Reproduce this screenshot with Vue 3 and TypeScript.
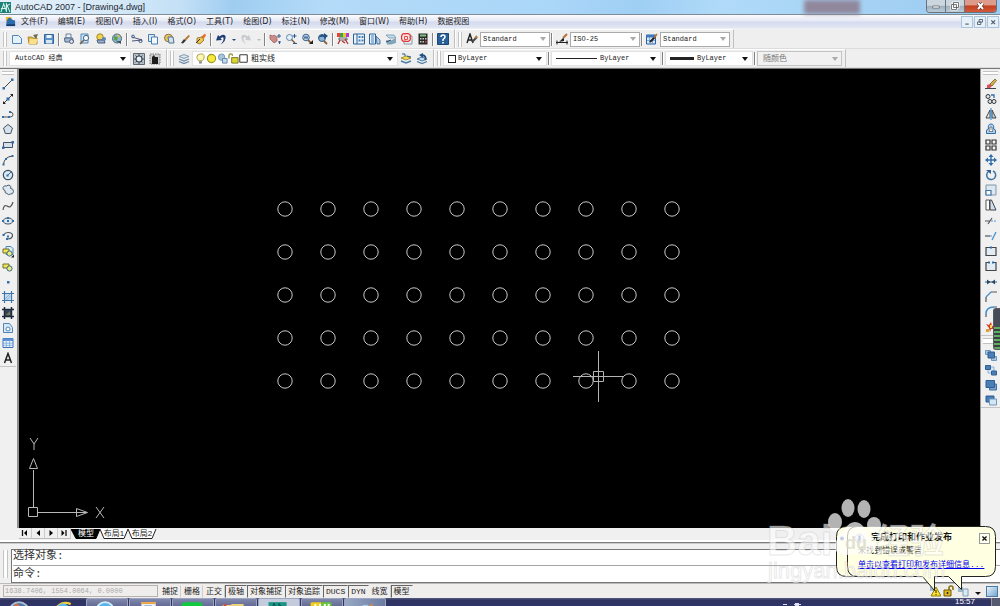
<script setup lang="ts">
import { ref } from 'vue'

interface Tool { id: string; label: string }

const menus: string[] = [
  '文件(F)', '编辑(E)', '视图(V)', '插入(I)', '格式(O)', '工具(T)',
  '绘图(D)', '标注(N)', '修改(M)', '窗口(W)', '帮助(H)', '数据视图',
]

const B = '#2f6ea8'
const page = `<path d="M1.5 2.5h6l3 3v5h-9z" fill="#e4f0fa" stroke="#4f86b8"/>`
const shapesYellow = `<path d="M1 3h6v4H1z" fill="#f3e558" stroke="#6d7028"/><circle cx="7.5" cy="7.5" r="2.6" fill="#e6ee7a" stroke="#40678c"/>`

const icons: Record<string, string> = {
  new: page,
  open: `<path d="M1 4h4l1 1h4v6H2z" fill="#e8b84a" stroke="#9c7a2c" stroke-width=".8"/><path d="M3 6h8l-2 5H2z" fill="#fbe08a"/><path d="M6 2l5-1-2 5z" fill="#6b6b52"/>`,
  save: `<path d="M1.500 1.500h9v9h-9z" fill="#5c93c9" stroke="#2f659d"/><path d="M3.500 2h5v3h-5z" fill="#eef6fc"/><path d="M3 7h6v3.500H3z" fill="#d7e6f3"/>`,
  plot: `<path d="M3 1h5v4H3z" fill="#eef2f8" stroke="#4e6488" stroke-width=".8"/><path d="M1.500 5h8l1 4H2z" fill="#a9b9cf" stroke="#4e6488"/><circle cx="8.500" cy="8.500" r="2" fill="#dde" stroke="#50607c"/>`,
  preview: `<path d="M2 1h7v9H2z" fill="#cfe3f5" stroke="#4f86b8"/><circle cx="7" cy="5" r="2.600" fill="#f6fbff" stroke="#40678c"/><path d="M5 7L1 11" stroke="#7a5a3a" stroke-width="1.500"/>`,
  publish: `<circle cx="5" cy="4" r="3.200" fill="#f0d24e" stroke="#a58428"/><path d="M2 7h7l1 3H3z" fill="#9cb0c8" stroke="#485f7f"/><circle cx="9" cy="6" r="2" fill="#5a88bd"/>`,
  globe: `<circle cx="6" cy="5.500" r="4.500" fill="#8ab9dd" stroke="#567"/><path d="M3 3l4 1-1 4-3-1z" fill="#5aa244"/><path d="M6 1l3 2-2 2z" fill="#e8c33e"/><path d="M5 8h5v3z" fill="#405066"/>`,
  cut: `<path d="M1 4l10 3M1 8l10-1" stroke="#557" fill="none"/><circle cx="2" cy="3.500" r="1.400" fill="none" stroke="#3a5f88"/><circle cx="9.500" cy="8" r="1.600" fill="none" stroke="#3a5f88"/>`,
  copy: `<path d="M1.500 1.500h6v7h-6z" fill="#dceaf6" stroke="#4c7fb0"/><path d="M4.500 4h6v7h-6z" fill="#f0f7fd" stroke="#4c7fb0"/>`,
  paste: `<ellipse cx="5.500" cy="5" rx="4" ry="3.800" fill="#e9c660" stroke="#8a7444"/><path d="M5 4h5l1 6H6z" fill="#d2e4f4" stroke="#526f8c"/>`,
  brush: `<path d="M2 10l3-4 2 1.500-3 3z" fill="#333"/><path d="M5.500 6l4-4 1.500 1-4 4.500z" fill="#b8783c"/>`,
  match: `<path d="M6 4l4-3.500 1 2-3 4z" fill="#f06a2a"/><path d="M2 5l5-1 2 3-4 4-3-1z" fill="#efc54c" stroke="#8c6b28" stroke-width=".8"/><path d="M1 10l4-4" stroke="#333"/>`,
  undo: `<path d="M10.500 3Q8 .500 4.500 3.500L3 2 1 7.500 7 7 5.500 5.500Q8 3.500 8.500 5q.500 3-3 6.500Q11.500 8 10.500 3z" fill="#1e3d74"/>`,
  redo: `<path d="M1.500 3Q4 .500 7.500 3.500L9 2l2 5.500L5 7l1.500-1.500Q4 3.500 3.500 5 3 8 6.500 11.500.500 8 1.500 3z" fill="#c8cbd0"/>`,
  pan: `<path d="M1 2l3 1 1-1 3 2v4l-3 2-4-4z" fill="#c98c88" stroke="#a8605e" stroke-width=".8"/><path d="M10 1v4M8 3h4M9 9h3M10.500 8v3" stroke="#2f5f94"/>`,
  zoomrt: `<circle cx="4.500" cy="4.500" r="3" fill="#e4f1fb" stroke="#5a87b0"/><path d="M6.500 6.500L10 10" stroke="#86603c" stroke-width="1.500"/><path d="M9.500 1v4M7.500 3h4M8 10.500h4" stroke="#29588c"/>`,
  zoomwin: `<circle cx="5" cy="4.500" r="3.300" fill="#b5cde4" stroke="#3c668f"/><path d="M7 7l3 3" stroke="#86603c" stroke-width="1.800"/><path d="M3 3.500h4v2H3z" fill="#49729d"/><path d="M8 11h4V7z" fill="#222"/>`,
  zoomprev: `<circle cx="5" cy="5" r="3.500" fill="#8db1d2" stroke="#315c86"/><path d="M2 5q1-4 5-3V0l4 3-4 3V4Q4 3 2 5z" fill="#244f82"/><path d="M7 8l3 3" stroke="#86603c" stroke-width="1.800"/>`,
  props: `<path d="M0 0h3v4H0z" fill="#e8423a"/><path d="M3 0h3v4H3z" fill="#3aa548"/><path d="M6 0h3v4H6z" fill="#e6c82c"/><path d="M9 0h3v4H9z" fill="#b43cc8"/><path d="M2 5h8v2H2z" fill="#f5f5f5" stroke="#444" stroke-width=".8"/><path d="M3 7l-2 4M8 6l3 5M5 8l3 2" stroke="#a33" stroke-width="1.300"/>`,
  design: `<path d="M.500 1h11v10H.500z" fill="#e9f2fa" stroke="#2d6299"/><path d="M4 1v10" stroke="#2d6299"/><path d="M5.500 3h2v2h-2zM8.500 3h2v2h-2zM5.500 6.500h2v2h-2zM8.500 6.500h2v2h-2z" fill="#4a81b8"/>`,
  palette: `<path d="M.500 1h6v10H.500z" fill="#e9f2fa" stroke="#2d6299"/><path d="M2 3h3M2 5h3M2 7h3M2 9h3" stroke="#4a81b8"/><path d="M7 3l4 4v4H8z" fill="#b5cfe6" stroke="#35648f" stroke-width=".8"/>`,
  sheet: `<path d="M1 2h8l2 3H4z" fill="#c6dcea" stroke="#6d96b0" stroke-width=".8"/><path d="M1 7l4 1 6-3v5l-5 1.500H2z" fill="#7fa6b8"/><path d="M1 9l5-2" stroke="#346"/>`,
  markup: `<path d="M3 3h8v8H3z" fill="#e9eef4" stroke="#74859a" stroke-width=".8"/><path d="M1 2q1-2 3-1 2-1 4 0 2 1 1 3 1 3-1 4-2 1-4 0-2 1-3-1-1-3 0-5z" fill="#fce4e4" stroke="#e02828" stroke-width="1.200"/><path d="M3.500 3.500h3v3h-3z" fill="none" stroke="#e02828" stroke-width=".8"/>`,
  calc: `<path d="M1.500.500h9v11h-9z" fill="#2b2b2b"/><path d="M3 1.500h6v2H3z" fill="#7fbf8a"/><path d="M3 5h1.500v1.500H3zM5.500 5H7v1.500H5.500zM8 5h1.500v1.500H8zM3 8h1.500v1.500H3zM5.500 8H7v1.500H5.500z" fill="#c9c9c9"/><path d="M8 8h1.500v1.500H8z" fill="#e44"/>`,
  help: `<path d="M.500.500h11v11H.500z" fill="#2a6099" stroke="#1d4670"/><path d="M4 4q0-2 2-2t2 2q0 1-2 2.500V8" fill="none" stroke="#fff" stroke-width="1.500"/><path d="M5.200 9h1.600v1.500H5.200z" fill="#fff"/>`,
  textstyle: `<path d="M1 10L4 1l3 9M2 7h4" fill="none" stroke="#222" stroke-width="1.400"/><path d="M6 9l5-5" stroke="#444" stroke-width="2"/><path d="M9 5l2-2" stroke="#c07a3c" stroke-width="2"/>`,
  dimstyle: `<path d="M0 9.500h12M1 7.500v4M11 7.500v4" stroke="#222"/><path d="M3 9l5-5v4z" fill="#222"/><path d="M7 5l4-4" stroke="#b8703a" stroke-width="2"/>`,
  tablestyle: `<path d="M.500 2h9v9h-9z" fill="#dbe9f8" stroke="#2a62a5"/><path d="M.500 2h9v2.500h-9z" fill="#3f7ac0"/><path d="M3.500 4v7M6.500 4v7M1 7.500h8" stroke="#6a9bd0" stroke-width=".8"/><path d="M4 9l5-5" stroke="#222" stroke-width="2"/><path d="M8 5l3-4" stroke="#b8703a" stroke-width="1.600"/>`,
  gear: `<path d="M.500.500h11v11H.500z" fill="#b9c1c9" stroke="#5d6873"/><circle cx="6" cy="6" r="3" fill="#eef3f7" stroke="#3b4a58" stroke-width="1.200"/><path d="M6 1v2M6 9v2M1 6h2M9 6h2M2.500 2.500l1.500 1.500M8 8l1.500 1.500M9.500 2.500L8 4M4 8L2.500 9.500" stroke="#3b4a58"/>`,
  workspace: `<path d="M1 1h10v10H1z" fill="#d0d0d0" stroke="#777" stroke-dasharray="1.500 1"/><path d="M3 4l2-2 1 2h3v7H3z" fill="#1d1d1d"/>`,
  layers: `<path d="M1 3.500l5-2 5 2-5 2z" fill="#d8e4ee" stroke="#6889a6" stroke-width=".8"/><path d="M1 6l5 2 5-2M1 8.500l5 2 5-2" fill="none" stroke="#6889a6" stroke-width="1.300"/>`,
  laycur: `<path d="M1 5l5-2 5 2-5 2z" fill="#f3dc4c" stroke="#8a7a2a" stroke-width=".8"/><path d="M1 8l5 2 5-2" fill="none" stroke="#4d7ea6" stroke-width="1.500"/><path d="M2 1l3 0v2M7 3l4 1" stroke="#2c5f93" fill="none"/>`,
  layprev: `<path d="M1 6l5-2 5 2-5 2z" fill="#c9dbe9" stroke="#4d7ea6"/><path d="M1 8.500l5 2 5-2" fill="none" stroke="#4d7ea6" stroke-width="1.300"/><path d="M9 7q2-4-3-5" stroke="#234f80" stroke-width="1.800" fill="none"/><path d="M7 0v5L3 2z" fill="#234f80"/>`,
  bulb: `<path d="M4 8.500Q2 6.500 2 4.500 2 1.500 6 1t4 3.500q0 2-2 4z" fill="#fdf7b0" stroke="#a49c4a"/><path d="M4.500 9h3v2.500h-3z" fill="#8b8b80"/>`,
  sun: `<circle cx="6" cy="6" r="4.500" fill="#f7e93a" stroke="#9b9324" stroke-width="1.200"/>`,
  vpsun: `<circle cx="5" cy="4.500" r="3.500" fill="#a9c3d8" stroke="#6e93b2"/><path d="M6 6h5v5H6z" fill="#c7dae9" stroke="#5b86aa"/>`,
  lock: `<path d="M1 6V3q0-2 2-2t2 2" fill="none" stroke="#8b8a26" stroke-width="1.300"/><path d="M4 5h7v6H4z" fill="#dcd536" stroke="#777420"/>`,
  square: `<path d="M1 1h10v10H1z" fill="#fff" stroke="#333" stroke-width="1.300"/>`,
  line: `<path d="M2 10l8-8" stroke="#444"/><path d="M.500 9h2.500v2.500H.500zM9 .500h2.500V3H9z" fill="${B}"/>`,
  xline: `<path d="M1 11L11 1" stroke="#333"/><path d="M4.500 4.500h3v3h-3z" fill="${B}"/><path d="M1 8v3h3zM11 4V1H8z" fill="#222"/>`,
  pline: `<path d="M1 9h7q3 0 3-2.500T8 4" fill="none" stroke="#555"/><path d="M0 8h2v2H0zM6 8h2v2H6zM7 3h2v2H7z" fill="${B}"/>`,
  polygon: `<path d="M6 1.500l4.500 3.500-1.800 5.500H3.300L1.500 5z" fill="#d4e2ee" stroke="#46535f"/>`,
  rect: `<path d="M1.500 3.500h9v5h-9z" fill="#d4e2ee" stroke="#46535f"/><path d="M0 7.500h2.500V10H0zM9.500 2H12v2.500H9.500z" fill="${B}"/>`,
  arc: `<path d="M1.500 10.500Q2 3 10.500 2" fill="none" stroke="#444"/><path d="M.500 9.500h2v2h-2zM3 4h2v2H3zM9.500 1h2v2h-2z" fill="${B}"/>`,
  circle: `<circle cx="6" cy="6" r="4.700" fill="#dce8f2" stroke="#35506b" stroke-width="1.200"/><path d="M5 7l4-4" stroke="${B}"/><path d="M4.500 5.500h2v2h-2z" fill="${B}"/>`,
  revcloud: `<path d="M3 6.500Q.500 6 1 3.500 2 1 4.500 2 6 .500 8 1.500 9.500 2.500 8.500 4.500 11.500 4.500 11.500 7.500 11 10.500 8.500 10 6 11.500 5 9.500 2.500 9.500 3 6.500z" fill="#dce8f2" stroke="#4b5b6b"/>`,
  spline: `<path d="M1 10q1-6 4-4 4 3 6-4" fill="none" stroke="#555" stroke-width="1.200"/>`,
  ellipse: `<ellipse cx="6" cy="6" rx="4.500" ry="3" fill="#dce8f2" stroke="#46535f"/><path d="M0 5h2v2H0zM10 5h2v2h-2zM5 2h2v2H5zM5 5h2v2H5z" fill="${B}"/>`,
  ellarc: `<path d="M1.500 5Q3 2.500 6 2.500q4.500 0 4.500 3T6 9" fill="none" stroke="#46535f" stroke-width="1.200"/><path d="M.500 4h2v2h-2zM5 5.500h2v2H5zM4 8h2v2H4z" fill="${B}"/>`,
  insert: `<path d="M4 .500h5l2 2v6H4z" fill="#deecf8" stroke="#4f86b8"/>${shapesYellow}<path d="M9 11.500h3v-3z" fill="#222"/>`,
  block: shapesYellow,
  point: `<path d="M5 5h2.500v2.500H5z" fill="${B}"/>`,
  hatch: `<path d="M2.500 0v12M9.500 0v12M0 2.500h12M0 9.500h12" stroke="#3f75ab" stroke-width="1.200"/><path d="M3 3h6v6H3z" fill="#c4dbee"/><path d="M3 8l5-5M4.500 9L9 4.500" stroke="#74a2cb" stroke-width=".7"/>`,
  gradient: `<path d="M2.500 0v12M9.500 0v12M0 2.500h12M0 9.500h12" stroke="#1d2a3a" stroke-width="1.500"/><path d="M3 3h6v6H3z" fill="#33425c"/><path d="M4 8l4-4v4z" fill="#7d7b4a"/>`,
  region: `<path d="M1.500 1.500h6l3 4v5h-9z" fill="#d9e8f5" stroke="#4f86b8"/><circle cx="6" cy="7" r="2" fill="#fff" stroke="#4f86b8"/>`,
  table: `<path d="M1 1.500h10v9H1z" fill="#eaf3fc" stroke="#3c74ba"/><path d="M1 1.500h10v2.500H1z" fill="#5c92d4"/><path d="M4.300 3v7M7.600 3v7M1 6.200h10M1 8.300h10" stroke="#7ba8da" stroke-width=".8"/>`,
  mtext: `<path d="M2.500 11L6 1.500 9.500 11M3.800 8h4.400" fill="none" stroke="#222" stroke-width="1.500"/>`,
  erase: `<path d="M5 6l5-5 1.500 1.500L7 8z" fill="#d8b24a" stroke="#6d5a26" stroke-width=".8"/><path d="M2 7l3-1 2 2-2 2H2z" fill="#d8525a"/><path d="M0 10.500h11" stroke="#444"/>`,
  copyobj: `<circle cx="3" cy="3.500" r="2" fill="#dde8f2" stroke="#333"/><circle cx="5" cy="8.500" r="2" fill="#dde8f2" stroke="#333"/><circle cx="9" cy="8.500" r="2" fill="#dde8f2" stroke="#333"/><path d="M6 2h3v3" stroke="${B}" fill="none" stroke-width="1.300"/>`,
  mirror: `<path d="M5 2v8H1z" fill="#e2edf6" stroke="#444"/><path d="M7 2v8h4z" fill="#b8d0e4" stroke="#444"/><path d="M6 0v12" stroke="#3f8ed0" stroke-width="1.200"/>`,
  offset: `<path d="M1.500 10.500V8q0-2 2-2-1-5 2.500-5t2.500 5q2 0 2 2v2.500z" fill="#b5d4ee" stroke="#2f6ea8"/><path d="M4 8.500h4q0-1-1-1.500V4H5v3q-1 .500-1 1.500z" fill="#fff" stroke="#555" stroke-width=".7"/>`,
  array: `<path d="M1 1h4v4H1zM7 1h4v4H7zM1 7h4v4H1zM7 7h4v4H7z" fill="#f2f6fa" stroke="#333" stroke-width="1.200"/>`,
  move: `<path d="M6 1v10M1 6h10" stroke="${B}" stroke-width="1.400"/><path d="M6 0l2.500 3h-5zM6 12l2.500-3h-5zM0 6l3-2.500v5zM12 6L9 3.500v5z" fill="${B}"/>`,
  rotate: `<path d="M3.500 2.500A4.500 4.500 0 1 0 8 2" fill="none" stroke="#3d74a6" stroke-width="1.500"/><path d="M1 1h5v4z" fill="#2d5f92"/>`,
  scale: `<path d="M1 1h10v10H1z" fill="#dbe7f1" stroke="#8296a8"/><path d="M1 6.500h5V11H1z" fill="#fff" stroke="#3d74a6" stroke-width="1.200"/>`,
  stretch: `<path d="M1 1h3.500v10H1z" fill="#fff" stroke="#555"/><path d="M5 1h1.500L11 11H5z" fill="#cddff0" stroke="#444"/>`,
  trim: `<path d="M0 6h4.500M3 9l4-6" stroke="#555" stroke-width="1.200"/><path d="M6 6h6" stroke="#4c96d8" stroke-width="1.200" stroke-dasharray="2 1"/>`,
  extend: `<path d="M0 6h5" stroke="#555" stroke-width="1.200"/><path d="M5 6h3" stroke="#4c96d8" stroke-dasharray="2 1"/><path d="M7 10l4-8" stroke="#3f8ed0" stroke-width="1.200"/>`,
  breakpt: `<path d="M1 2.500h10v8H1z" fill="#e2ecf5" stroke="#444" stroke-width="1.200"/><path d="M5 1.500h2v2H5z" fill="${B}"/>`,
  break: `<path d="M4 2.500H1v8h10v-8H8" fill="#e2ecf5" stroke="#444" stroke-width="1.200"/><path d="M3 1.500h2v2H3zM7 1.500h2v2H7z" fill="${B}"/>`,
  join: `<path d="M0 6h12" stroke="#456"/><path d="M2 3.500L5.500 6 2 8.500zM10 3.500L6.500 6 10 8.500z" fill="#234b70"/>`,
  chamfer: `<path d="M1 11V6M6 1h6" stroke="#555" stroke-width="1.200"/><path d="M1 6l5-5" stroke="#3f8ed0" stroke-width="1.200"/>`,
  fillet: `<path d="M1 11V8M9 1h3" stroke="#555" stroke-width="1.200"/><path d="M1 8q0-7 8-7" stroke="#3f8ed0" stroke-width="1.500" fill="none"/>`,
  explode: `<path d="M1 3l3 1 2-3 1 4 4-1-2 4-3 0-1 3-1-4z" fill="#d83a2a"/><path d="M1 8h3v3H1zM8 8h3v3H8z" fill="#d9a43a"/><path d="M5 4h2v3H5z" fill="#ffd94c"/>`,
  front: `<path d="M.500 1.500h5v4h-5zM6.500 7.500h5v4h-5z" fill="#a9c6e0" stroke="#6d98c0"/><path d="M3 3h6.500v6H3z" fill="#4a7eb4" stroke="#2f5f94"/>`,
  back: `<path d="M3 3h6v6H3z" fill="#dce9f5" stroke="#8fb2d2"/><path d="M.500 1.500h5v4h-5zM6.500 7h5v4h-5z" fill="#4a7eb4" stroke="#2f5f94"/>`,
  above: `<path d="M4.500 5h7v6h-7z" fill="#7ba3cc" stroke="#3f71a6"/><path d="M1 1.500h8.500v7H1z" fill="#4a7eb4" stroke="#2f5f94"/>`,
  under: `<path d="M1 2h8v6H1z" fill="#4a7eb4" stroke="#2f5f94"/><path d="M4.500 5h7v6h-7z" fill="#d4e5f4" stroke="#6d98c0"/>`,
  logo: `<path d="M0 0h12v12H0z" fill="#1c8177"/><path d="M1 11L4 2l3 8M7 1v10M7 2l4 9M1 7h5M8 4l3-2" fill="none" stroke="#d8f3ee" stroke-width="1.100"/>`,
  doc: `<path d="M1 1h6v5H1z" fill="#f0b92e"/><path d="M2 5q2-5 5-2 1 2 4 2v6H1z" fill="#2b6cae"/><path d="M2 9h9v2H2z" fill="#173c69"/>`,
}

const tool = (s: string): Tool[] => s.split(' ').map(p => {
  const [id, label] = p.split(':')
  return { id, label }
})

const standardGroups: Tool[][] = [
  tool('new:新建 open:打开 save:保存'),
  tool('plot:打印 preview:打印预览 publish:发布 globe:三维DWF'),
  tool('cut:剪切 copy:复制 paste:粘贴 brush:特性匹配 match:块编辑器'),
]
const viewGroups: Tool[][] = [
  tool('pan:实时平移 zoomrt:实时缩放 zoomwin:窗口缩放 zoomprev:缩放上一个'),
  tool('props:特性 design:设计中心 palette:工具选项板 sheet:图纸集 markup:标记集 calc:计算器'),
  tool('help:帮助'),
]
const drawTools = tool('line:直线 xline:构造线 pline:多段线 polygon:正多边形 rect:矩形 arc:圆弧 circle:圆 revcloud:修订云线 spline:样条曲线 ellipse:椭圆 ellarc:椭圆弧 insert:插入块 block:创建块 point:点 hatch:图案填充 gradient:渐变色 region:面域 table:表格 mtext:多行文字')
const modifyTools = tool('erase:删除 copyobj:复制对象 mirror:镜像 offset:偏移 array:阵列 move:移动 rotate:旋转 scale:缩放 stretch:拉伸 trim:修剪 extend:延伸 breakpt:打断于点 break:打断 join:合并 chamfer:倒角 fillet:圆角 explode:分解')
const orderTools = tool('front:前置 back:后置 above:置于对象之上 under:置于对象之下')
const styleCombos = [
  { icon: 'textstyle', label: '文字样式', value: 'Standard' },
  { icon: 'dimstyle', label: '标注样式', value: 'ISO-25' },
  { icon: 'tablestyle', label: '表格样式', value: 'Standard' },
]
const layerMarks = ['bulb', 'sun', 'vpsun', 'lock', 'square']

const cols = Array.from({ length: 10 }, (_, i) => 266 + i * 43)
const rows = Array.from({ length: 5 }, (_, i) => 140 + i * 43)

const modes = ref([
  { name: '捕捉', on: false }, { name: '栅格', on: false }, { name: '正交', on: false },
  { name: '极轴', on: true }, { name: '对象捕捉', on: true }, { name: '对象追踪', on: true },
  { name: 'DUCS', on: true }, { name: 'DYN', on: true }, { name: '线宽', on: false },
  { name: '模型', on: true },
])
const command = ref('')
const balloon = ref(true)
</script>

<template>
  <div class="app">
    <header class="title">
      <svg class="ico" viewBox="0 0 12 12" v-html="icons.logo" />
      <h1>AutoCAD 2007 - [Drawing4.dwg]</h1>
      <i class="blur-tab" />
      <div class="win">
        <button aria-label="最小化"><svg viewBox="0 0 22 12"><path d="M7 6h8v2.500H7z" fill="#fff" stroke="#555" stroke-width=".8" /></svg></button>
        <button aria-label="还原"><svg viewBox="0 0 18 12"><path d="M7.500 2.500h5v5h-5zM5.500 4.500h5v5h-5z" fill="#ddd" stroke="#fff" stroke-width="2" /><path d="M7.500 2.500h5v5h-5zM5.500 4.500h5v5h-5z" fill="none" stroke="#555" stroke-width=".8" /></svg></button>
        <button class="close" aria-label="关闭"><svg viewBox="0 0 30 12"><path d="M12.500 3l5 6M17.500 3l-5 6" stroke="#5b2a24" stroke-width="3.400" /><path d="M12.500 3l5 6M17.500 3l-5 6" stroke="#fff" stroke-width="2" /></svg></button>
      </div>
    </header>

    <nav class="menu">
      <svg class="ico" viewBox="0 0 12 12" v-html="icons.doc" />
      <button v-for="m in menus" :key="m">{{ m }}</button>
      <div class="mdi">
        <button aria-label="最小化图形"><svg viewBox="0 0 12 12"><path d="M4 8.500h4" stroke="#456" stroke-width="1.300" /></svg></button>
        <button aria-label="还原图形"><svg viewBox="0 0 12 12"><path d="M5 3h4v3H5zM3 6h4v3H3z" fill="none" stroke="#456" /></svg></button>
        <button aria-label="关闭图形"><svg viewBox="0 0 12 12"><path d="M4 4l4.500 4.500M8.500 4L4 8.500" stroke="#456" stroke-width="1.300" /></svg></button>
      </div>
    </nav>

    <div class="bars first">
      <div class="bar">
        <i class="grip" />
        <template v-for="(g, n) in standardGroups" :key="n">
          <button v-for="t in g" :key="t.id" class="tb" :aria-label="t.label"><svg class="ico" viewBox="0 0 12 12" v-html="icons[t.id]" /></button>
          <i class="sep" />
        </template>
        <button class="tb" aria-label="放弃"><svg class="ico" viewBox="0 0 12 12" v-html="icons.undo" /></button>
        <button class="drop" aria-label="放弃列表" />
        <button class="tb" aria-label="重做"><svg class="ico" viewBox="0 0 12 12" v-html="icons.redo" /></button>
        <button class="drop off" aria-label="重做列表" />
        <template v-for="(g, n) in viewGroups" :key="'v' + n">
          <i class="sep" />
          <button v-for="t in g" :key="t.id" class="tb" :aria-label="t.label"><svg class="ico" viewBox="0 0 12 12" v-html="icons[t.id]" /></button>
        </template>
      </div>
      <div class="bar">
        <i class="grip" />
        <template v-for="(c, n) in styleCombos" :key="c.label">
          <i v-if="n" class="sep" />
          <button class="tb" :aria-label="c.label + '管理'"><svg class="ico" viewBox="0 0 12 12" v-html="icons[c.icon]" /></button>
          <span class="combo w-style dim"><select :aria-label="c.label"><option>{{ c.value }}</option></select></span>
        </template>
      </div>
    </div>

    <div class="bars second">
      <div class="bar">
        <i class="grip" />
        <span class="combo w-space"><select aria-label="工作空间"><option>AutoCAD 经典</option></select></span>
        <button class="tb" aria-label="工作空间设置"><svg class="ico" viewBox="0 0 12 12" v-html="icons.gear" /></button>
        <button class="tb" aria-label="我的工作空间"><svg class="ico" viewBox="0 0 12 12" v-html="icons.workspace" /></button>
      </div>
      <div class="bar">
        <i class="grip" />
        <button class="tb" aria-label="图层特性管理器"><svg class="ico" viewBox="0 0 12 12" v-html="icons.layers" /></button>
        <span class="combo w-layer">
          <svg v-for="m in layerMarks" :key="m" class="mark" viewBox="0 0 12 12" v-html="icons[m]" />
          <select class="cjk" aria-label="图层"><option>粗实线</option></select>
        </span>
        <button class="tb" aria-label="将对象的图层置为当前"><svg class="ico" viewBox="0 0 12 12" v-html="icons.laycur" /></button>
        <button class="tb" aria-label="上一个图层"><svg class="ico" viewBox="0 0 12 12" v-html="icons.layprev" /></button>
      </div>
      <div class="bar">
        <i class="grip" />
        <span class="combo w-color"><i class="swatch" /><select aria-label="颜色"><option>ByLayer</option></select></span>
        <i class="sep" />
        <span class="combo w-ltype"><i class="rule" /><select aria-label="线型"><option>ByLayer</option></select></span>
        <i class="sep" />
        <span class="combo w-lweight"><i class="rule heavy" /><select aria-label="线宽"><option>ByLayer</option></select></span>
        <i class="sep" />
        <span class="combo w-plot dim off"><select class="cjk" aria-label="打印样式" disabled><option>随颜色</option></select></span>
      </div>
    </div>

    <main class="work">
      <aside class="side">
        <i class="hgrip" />
        <div class="tools draw">
          <button v-for="t in drawTools" :key="t.id" :aria-label="t.label"><svg class="ico" viewBox="0 0 12 12" v-html="icons[t.id]" /></button>
        </div>
      </aside>
      <section class="canvas">
        <svg class="model" fill="none">
          <g stroke="#c8c8c8">
            <template v-for="y in rows" :key="y">
              <circle v-for="x in cols" :key="x" :cx="x" :cy="y" r="7.200" />
            </template>
          </g>
          <path d="M554 307.500h51M579.500 282v51M574.500 302.500h10v10h-10z" stroke="#b4b4b4" />
        </svg>
        <svg class="ucs" viewBox="0 0 90 80" fill="none" stroke="#b8b8b8">
          <path d="M4.500 61.500h9v9h-9zM9.500 61V24M13.500 66.500h49M9.500 12.500L5.500 22.500h8zM63.500 66.500l-11-4v8z" />
          <path d="M6-8l4 6 4-6M10-2v6M72 61l8 11M80 61l-8 11" />
        </svg>
      </section>
      <aside class="side right">
        <i class="hgrip" />
        <div class="tools modify">
          <button v-for="t in modifyTools" :key="t.id" :aria-label="t.label"><svg class="ico" viewBox="0 0 12 12" v-html="icons[t.id]" /></button>
        </div>
        <i class="hgrip second" />
        <div class="tools order">
          <button v-for="t in orderTools" :key="t.id" :aria-label="t.label"><svg class="ico" viewBox="0 0 12 12" v-html="icons[t.id]" /></button>
        </div>
        <i class="meter" />
      </aside>
    </main>

    <div class="tabs">
      <button aria-label="第一个"><svg viewBox="0 0 12 10"><path d="M3.500 2v6" stroke="#111" stroke-width="1.300" /><path d="M8 2v6L5 5z" /></svg></button>
      <button aria-label="上一个"><svg viewBox="0 0 12 10"><path d="M8 2v6L4.500 5z" /></svg></button>
      <button aria-label="下一个"><svg viewBox="0 0 12 10"><path d="M4.500 2v6L8 5z" /></svg></button>
      <button aria-label="最后一个"><svg viewBox="0 0 12 10"><path d="M3.500 2v6l3-3z" /><path d="M8 2v6" stroke="#111" stroke-width="1.300" /></svg></button>
      <div class="sheets">
        <button class="sheet cur"><svg viewBox="0 0 30 10" preserveAspectRatio="none"><path d="M0 0l5 9.500h20L29 0z" fill="#000" stroke="#000" /></svg><span>模型</span></button>
        <button class="sheet"><svg viewBox="0 0 30 10" preserveAspectRatio="none"><path d="M1 0l4 9.500h20L29 0" fill="#fff" stroke="#222" /></svg><span>布局1</span></button>
        <button class="sheet"><svg viewBox="0 0 30 10" preserveAspectRatio="none"><path d="M1 0l4 9.500h20L29 0" fill="#fff" stroke="#222" /></svg><span>布局2</span></button>
      </div>
    </div>

    <section class="cmd">
      <i class="grip" />
      <div class="cmdbox">
        <p>选择对象:</p>
        <label class="prompt">命令:<input v-model="command" type="text"></label>
      </div>
    </section>

    <footer class="status">
      <output class="coords">1638.7406, 1554.0064, 0.0000</output>
      <button v-for="m in modes" :key="m.name" :class="{ on: m.on }" :aria-pressed="m.on" @click="m.on = !m.on">{{ m.name }}</button>
      <div class="tray">
        <svg viewBox="0 0 12 12"><path d="M1 1h5v5H1z" fill="#9ab6d0" /><path d="M7 2l5 9H2z" fill="#ffe12c" stroke="#8a7a10" /><path d="M7 5v3M7 9v1" stroke="#222" /></svg>
        <svg viewBox="0 0 12 12"><path d="M6 6V3q0-2 2-2t2 2v2" fill="none" stroke="#8a7410" stroke-width="1.600" /><path d="M1 5h7v6H1z" fill="#e2b81c" stroke="#6d5a08" /><path d="M4.500 7v2" stroke="#222" stroke-width="1.500" /></svg>
        <svg viewBox="0 0 12 12"><path d="M1 2h5v5H1z" fill="#9fb8c8" /><path d="M6 4h5v7H6z" fill="#dbe9f2" stroke="#7fa0b8" /></svg>
        <button class="drop" aria-label="状态栏菜单" />
        <button class="clean" aria-label="清除屏幕" />
      </div>
    </footer>

    <div class="task">
      <button aria-label="开始"><svg viewBox="0 0 42 8"><circle cx="19" cy="11" r="11" fill="#aebfd4" /><circle cx="19" cy="11" r="9" fill="#5377a5" /><path d="M14 4q3-2 5 0v4h-6z" fill="#dd6b3c" /><path d="M20 5q3 1 5 0v3h-5z" fill="#7db548" /></svg></button>
      <button aria-label="浏览器"><svg viewBox="0 0 42 8"><path d="M12 8q7-9 16-5" fill="none" stroke="#f3cf3a" stroke-width="2.500" /><circle cx="20" cy="10" r="6" fill="none" stroke="#59b9ee" stroke-width="3" /></svg></button>
      <button class="open" aria-label="应用"><svg viewBox="0 0 42 8"><circle cx="19" cy="10" r="10" fill="#d5edfb" /><circle cx="19" cy="10" r="8" fill="#57b4ec" /></svg></button>
      <button class="open" aria-label="文档"><svg viewBox="0 0 42 8"><path d="M12 1h15v7H12z" fill="#e9f1fa" /><path d="M12 1h15v2H12z" fill="#f0a33c" /><path d="M15 5h8" stroke="#86a8cf" stroke-width="1.500" /></svg></button>
      <button class="open" aria-label="视频"><svg viewBox="0 0 42 8"><rect x="9" y="1" width="22" height="14" rx="4" fill="#0ecb3d" /></svg></button>
      <button class="open" aria-label="文件夹"><svg viewBox="0 0 42 8"><path d="M7 4h8l2-1h12v5H7z" fill="#ecd37d" /><path d="M8 3h3v2H8z" fill="#d8423a" /><path d="M17 5h8v1h-8z" fill="#4d9ad0" /></svg></button>
      <button class="open lit" aria-label="AutoCAD"><svg viewBox="0 0 42 8"><path d="M10 1h19v7H10z" fill="#1a9485" /><path d="M13 8l3-6 2 6M21 2v6M21 3l5 5" stroke="#0c4c45" fill="none" /></svg></button>
      <button class="open" aria-label="输入法"><svg viewBox="0 0 42 8"><path d="M9 8V2q0-1 2-1h9v7z" fill="#f4cd1a" /><path d="M20 1h9q2 0 2 2v5H20z" fill="#66c936" /><path d="M14 3v2M19 3v2M24 3v2M28 3v2" stroke="#fff" stroke-width="2" /></svg></button>
      <button class="open lit2" aria-label="画图"><svg viewBox="0 0 42 8"><path d="M14 8q4-5 10-4l3 4z" fill="#a8cfe6" /><path d="M25 5l4-3v3z" fill="#d18c4c" /></svg></button>
      <svg class="bits" viewBox="0 0 24 8"><path d="M2 6h4v1H2zM14 5h4v3h-4zM13 6h7v1h-7z" fill="#dfe2ec" /></svg>
      <time>15:57</time>
      <i class="peek" />
    </div>

    <div v-if="balloon" class="balloon">
      <svg class="shape" viewBox="0 0 160 75">
        <path d="M10.500.500H60v50H10.500q-10 0-10-10v-30q0-10 10-10z" fill="#ffffe1" stroke="#222" />
        <path d="M21.500.500h128q10 0 10 10v30q0 10-10 10h-24v13l-13-13h-14v14l-12-14h-65q-10 0-10-10v-30q0-10 10-10z" fill="#ffffe1" stroke="#222" />
        <circle cx="6" cy="12.500" r="2" fill="#3657b8" />
        <circle cx="23.500" cy="12.500" r="4.500" fill="#e6ecf7" stroke="#aab6d4" /><path d="M23.500 9.500v6" stroke="#1f49c0" stroke-width="2" />
      </svg>
      <div class="note">
        <strong>完成打印和作业发布</strong>
        <p>未找到错误或警告</p>
        <a href="#">单击以查看打印和发布详细信息...</a>
      </div>
      <button aria-label="关闭通知" @click="balloon = false"><svg viewBox="0 0 11 11"><path d="M3 3l5 5M8 3L3 8" stroke="#111" stroke-width="1.600" /></svg></button>
    </div>

    <svg class="mark-brand" viewBox="0 0 190 90">
      <g fill="#fff" fill-opacity=".7">
        <ellipse cx="69" cy="23" rx="7" ry="9" />
        <ellipse cx="82" cy="9" rx="6.500" ry="9" />
        <ellipse cx="98" cy="10" rx="6.500" ry="9" />
        <ellipse cx="108" cy="26" rx="7" ry="8" />
        <path d="M89 23q6 0 10 7 12 9 11 18-2 9-13 8-8-2-16 0-11 1-12-8 0-9 10-18 4-7 10-7z" />
      </g>
      <g fill="#fff" fill-opacity=".6" stroke="#aaa" stroke-opacity=".28" font-weight="bold">
        <text x="1" y="56" font-size="42">Bai</text>
        <text x="110" y="54" font-size="34">经验</text>
        <text x="2" y="79" font-size="22" font-weight="normal">jingyan.baidu.com</text>
      </g>
      <text x="79" y="50" font-size="18" font-weight="bold" fill="#dadac8" fill-opacity=".8">du</text>
    </svg>
  </div>
</template>

<style>
html, body { margin: 0; background: #f0efee; }
</style>

<style scoped>
.app { position: relative; display: flex; flex-direction: column; height: 100vh; overflow: hidden; background: #f0f0f0; color: #222; font: 8px/12px "Liberation Sans", "Noto Sans CJK SC", sans-serif; }
.app * { box-sizing: border-box; }
button { display: block; flex: none; margin: 0; padding: 0; border: 0; background: none; color: inherit; font: inherit; }
svg { display: block; }
p, h1 { margin: 0; font: inherit; }
.ico { width: 12px; height: 12px; }

.title { display: flex; flex: none; align-items: center; height: 15px; padding: 0 3px 0 0; border-bottom: 1px solid #7f8b96; background: linear-gradient(100deg, #e3f0fa 0, #d6e9f7 110px, #c3e0f6 180px, #9fcdf0 230px, #b4dbf8 320px, #aad6f8 55%, #9fcff4 64%, #b0daf8 72%, #9bcbf0 100%); }
.title .ico { width: 11px; height: 11px; }
.title h1 { flex: none; margin-left: 4px; color: #1c2733; font: 9px/14px "Liberation Sans", sans-serif; }
.blur-tab { width: 56px; height: 14px; margin-left: auto; background: #90879c; filter: blur(2px); }
.win { display: flex; align-self: flex-start; margin-left: 66px; border: 1px solid #68727e; border-top: 0; border-radius: 0 0 4px 4px; overflow: hidden; }
.win button { width: 19px; height: 12px; border-right: 1px solid #68727e; background: linear-gradient(#cbd6df 45%, #9dafbf 50%, #bccbd6); }
.win button svg { width: 100%; height: 12px; }
.win .close { width: 31px; border: 0; background: linear-gradient(#de9b8b 40%, #c33f20 50%, #d2593a); }

.menu { display: flex; flex: none; align-items: center; gap: 10px; height: 14px; padding-left: 5px; background: linear-gradient(#fbfcfe, #e6e9f5 45%, #d5dbee 55%, #e2e7f4); border-bottom: 1px solid #eceff6; }
.menu > .ico { width: 11px; height: 11px; margin-right: -5px; }
.menu > button { color: #1d1d28; font: 8px/12px "DejaVu Sans", "Noto Sans CJK SC", sans-serif; }
.mdi { display: flex; gap: 1px; margin-left: auto; padding-right: 1px; }
.mdi button { width: 12px; height: 12px; border: 1px solid #aec3d8; background: #e6f0f8; }

.bars { display: flex; flex: none; height: 20px; padding-left: 1px; border-bottom: 1px solid #dcdcdc; background: #efefef; }
.bars.second { height: 19px; }
.bar { display: flex; align-items: center; padding-right: 3px; border-top: 1px solid #fff; border-right: 1px solid #c0c0c0; }
.bar + .bar { border-left: 1px solid #fff; }
.grip { flex: none; width: 4px; height: 15px; margin: 0 2px; border: solid #c4c4c4; border-width: 0 1px; background: #fdfdfd; }
.tb { display: grid; place-items: center; width: 16px; height: 17px; }
.sep { flex: none; width: 2px; height: 13px; margin: 0 1px; border-left: 1px solid #828282; border-right: 1px solid #fff; }
.drop { width: 9px; height: 12px; }
.drop::after { content: ""; display: block; width: 0; margin: 1px auto 0; border: 2px solid transparent; border-top-color: #26466e; border-bottom: 0; }
.drop.off::after { border-top-color: #bbb; }

.combo { display: flex; flex: none; align-items: center; height: 15px; padding: 0 4px; border: 1px solid #e2e2e2; background: #fff; }
.combo::after { content: ""; border: 3px solid transparent; border-top: 4px solid #111; border-bottom: 0; }
.combo select { flex: 1; min-width: 0; height: 13px; margin: 0; padding: 0; border: 0; outline: 0; appearance: none; background: none; color: #222; font: 7px/13px "Liberation Mono", "Noto Sans CJK SC", monospace; opacity: 1; }
.combo select.cjk { font-size: 8px; }
.combo.dim { border-color: #ababab; padding: 0 3px 0 2px; }
.combo.dim::after { border-top-color: #aaa; }
.combo.off { background: #f1f1f1; border-color: #c4c4c4; padding-left: 5px; }
.combo.off select { color: #777; }
.w-style { width: 70px; }
.w-space { width: 122px; padding-left: 5px; }
.w-layer { width: 206px; padding-left: 2px; }
.w-color { width: 104px; }
.w-ltype { width: 110px; }
.w-lweight { width: 88px; }
.w-plot { width: 85px; }
.mark { flex: none; width: 11px; height: 11px; }
.mark:nth-of-type(5) { width: 9px; height: 9px; margin-right: 3px; }
.swatch { width: 8px; height: 8px; margin-right: 2px; border: 1px solid #222; }
.rule { width: 41px; height: 1px; margin: 0 3px 0 0; background: #222; }
.rule.heavy { width: 24px; height: 3px; }

.work { display: flex; flex: 1; min-height: 0; border-top: 1px solid #777; }
.side { position: relative; flex: none; width: 19px; padding-right: 1px; border-right: 2px solid #8e8e8e; background: #f0f0f0; }
.side.right { width: 20px; padding: 0; border-right: 0; border-left: 1px solid #999; }
.hgrip { display: block; height: 4px; margin: 2px 2px 1px; border: solid #c2c2c2; border-width: 1px 0; background: #fff; }
.hgrip.second { height: 6px; margin: 2px 2px 3px; }
.tools { display: flex; flex-direction: column; border-bottom: 1px solid #c4c4c4; }
.tools button { display: grid; flex: 1; place-items: center; width: 16px; }
.right .tools button { width: 20px; }
.draw { height: 291px; }
.modify { height: 260px; }
.order { height: 61px; }
.meter { position: absolute; top: 239px; right: 0; width: 7px; height: 42px; border: 1px solid #555a66; border-right: 0; border-radius: 3px 0 0 3px; background: linear-gradient(#474b57 45%, transparent 45%), repeating-linear-gradient(#3b4048 0 2px, #5fae5c 2px 4px); }
.canvas { position: relative; flex: 1; min-width: 0; overflow: hidden; background: #000; }
.model { width: 100%; height: 100%; }
.ucs { position: absolute; bottom: 2px; left: 5px; width: 90px; height: 80px; overflow: visible; }

.tabs { display: flex; flex: none; height: 14px; padding-left: 19px; border-bottom: 2px solid #fff; background: #f0f0f0; }
.tabs > button { width: 13px; height: 11px; border-right: 1px solid #ccc; border-bottom: 1px solid #bbb; }
.tabs > button svg { width: 12px; height: 10px; }
.sheets { display: flex; }
.sheet { position: relative; display: grid; width: 28px; height: 11px; place-items: center; }
.sheet svg { grid-area: 1 / 1; width: 30px; height: 10px; }
.sheet span { grid-area: 1 / 1; position: relative; line-height: 10px; }
.sheet.cur { color: #fff; }

.cmd { display: flex; flex: none; gap: 2px; height: 41px; padding: 6px 0 0 2px; border-top: 1px solid #7c7c7c; box-shadow: inset 0 1px #ccc; }
.cmd .grip { height: 28px; width: 5px; margin: 1px 1px; }
.cmdbox { flex: 1; padding-left: 1px; border: 1px solid #777; border-width: 1px 0 1px 1px; background: #fff; color: #333; font: 11px/13px "Liberation Mono", "Noto Sans CJK SC", monospace; }
.cmdbox p { height: 16px; border-bottom: 1px solid #a5a5a5; }
.prompt { display: flex; height: 16px; align-items: center; }
.prompt input { flex: 1; min-width: 0; height: 14px; padding: 0 2px; border: 0; outline: 0; background: none; font: inherit; }

.status { display: flex; flex: none; align-items: center; height: 15px; padding-left: 3px; border-top: 1px solid #bbb; background: #f0eeec; }
.coords { width: 155px; height: 12px; margin-right: 1px; padding-left: 1px; border: 1px solid #b5b2b0; color: #aaa; font: 7px/11px "Liberation Mono", monospace; }
.status > button { height: 13px; padding: 0 2px; border: 1px solid; border-color: #f0eeec #ccc #f0eeec #f0eeec; color: #222; font: 8px/12px "Liberation Mono", "Noto Sans CJK SC", monospace; }
.status > button.on { border-color: #666 #eee #eee #666; }
.tray { display: flex; align-items: center; gap: 2px; margin-left: auto; padding-right: 2px; }
.tray svg { width: 12px; height: 12px; }
.tray .drop { width: 13px; }
.tray .drop::after { margin-top: 4px; border-width: 3px; border-bottom: 0; border-top-color: #111; }
.clean { width: 12px; height: 11px; border: 1px solid #4d7aa3; background: linear-gradient(135deg, #e5f2fb, #76a5cd); }

.task { display: flex; flex: none; height: 8px; overflow: hidden; background: linear-gradient(#555a80, #2f3360 30%, #30356a); }
.task button { width: 42px; height: 12px; margin-right: 1px; border: 1px solid transparent; border-bottom: 0; border-radius: 2px 2px 0 0; }
.task button svg { width: 100%; height: 8px; }
.task .open { border-color: #9da4c0; background: linear-gradient(#8088ac, #545b8a); }
.task .lit { background: #c3cbdc; }
.task .lit2 { background: linear-gradient(90deg, #98a8c4, #6c7ba2); }
.bits { width: 24px; height: 8px; margin-left: auto; }
.task time { margin: 0 16px 0 150px; color: #fff; font: 8px/8px "Liberation Sans", sans-serif; }
.peek { width: 9px; border-left: 1px solid #999; background: #555a70; }

.balloon { position: absolute; right: 4px; bottom: 5px; width: 160px; height: 75px; }
.shape { width: 160px; height: 75px; }
.note { position: absolute; top: 6px; left: 22px; color: #111; font: 8px/13px "Liberation Mono", "Noto Sans CJK SC", monospace; white-space: nowrap; }
.note strong { display: block; margin-left: 13px; font-size: 9px; line-height: 12px; }
.note p { line-height: 14px; }
.note a { display: block; color: #0000f0; }
.balloon > button { position: absolute; top: 7px; right: 6px; width: 11px; height: 11px; border: 1px solid #999; background: #fffff0; }
.mark-brand { position: absolute; right: 44px; bottom: 17px; width: 190px; height: 90px; pointer-events: none; overflow: visible; font-family: "Liberation Sans", "Noto Sans CJK SC", sans-serif; }
</style>
